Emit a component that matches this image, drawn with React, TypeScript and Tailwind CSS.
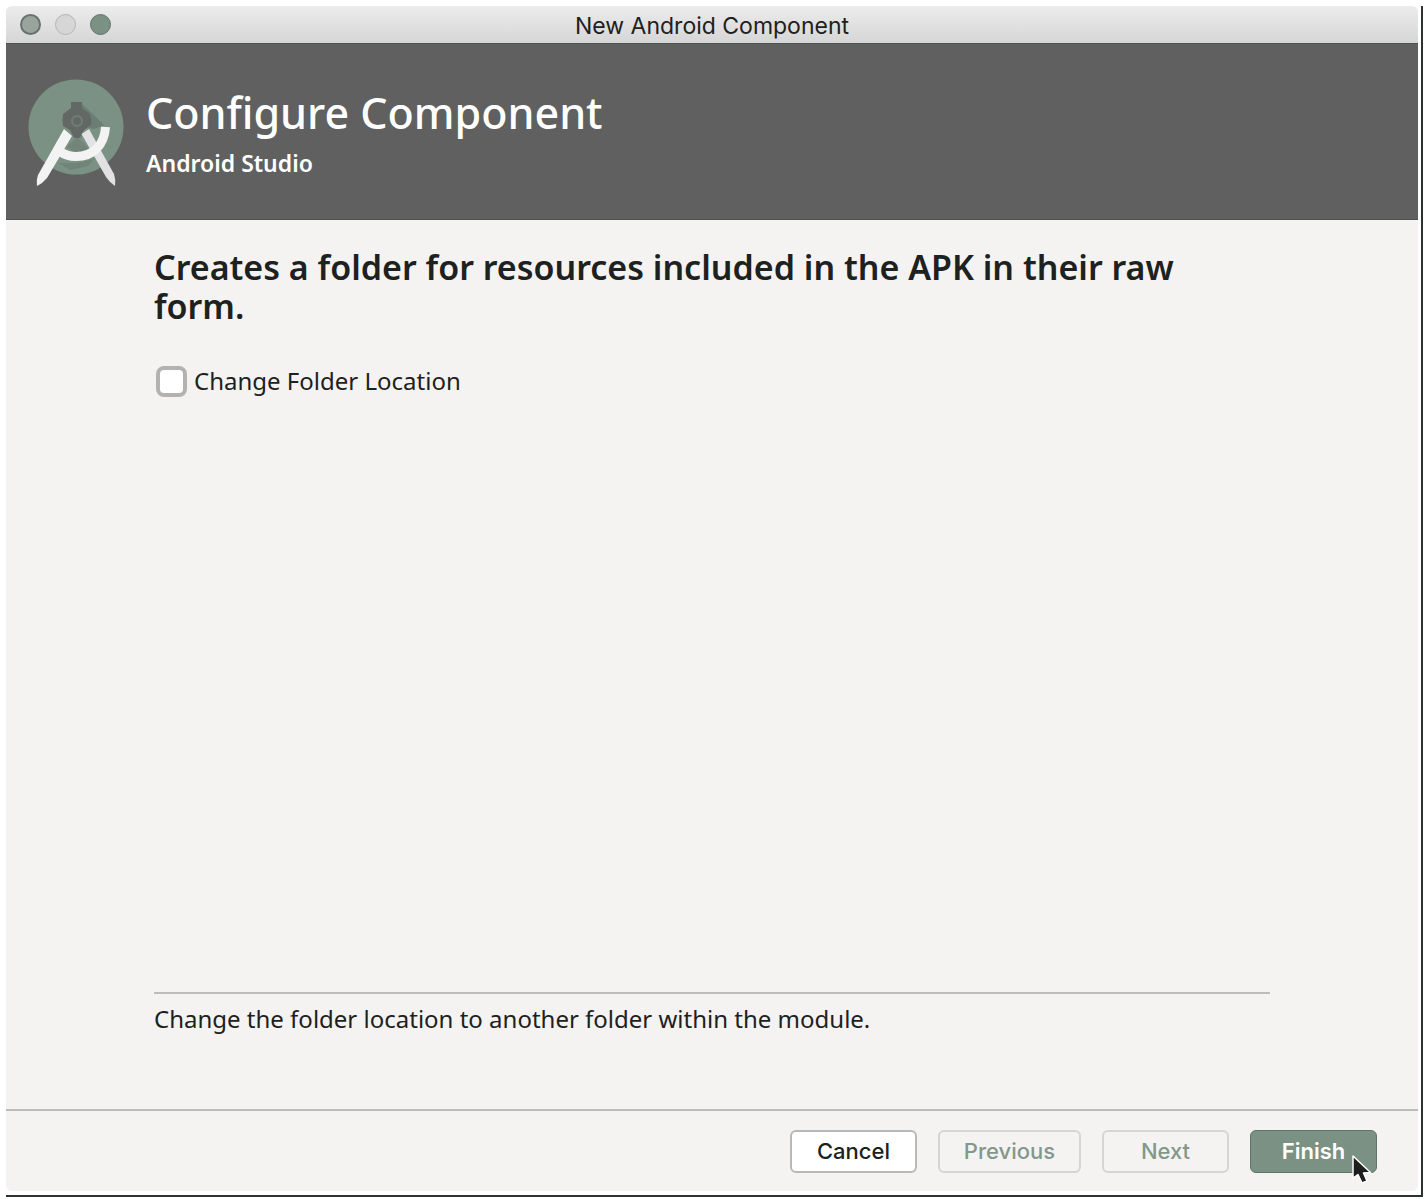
import React from "react";

function StudioLogo() {
  return (
    <svg width="96" height="108" viewBox="0 0 96 108" aria-hidden="true" className="shrink-0">
      <circle cx="48" cy="48" r="47.5" fill="#7a9183" />
      <path d="M53 24 L76 46 L66 50 L58 48 Z" fill="#6c7d73" />
      <path d="M39 68 L49 58 L62 71 L50 74 Z" fill="#728578" />
      <path d="M30 84 L48 84 L66 80 L60 87 L42 91 Z" fill="#718478" />
      <path
        d="M43 23 h11 v6 l7 5 q3 5 2 12 l-7 5 -4 8 h-6 l-4 -8 -7 -4 q-1 -7 0 -12 l8 -6 z"
        fill="#626965"
      />
      <circle cx="49" cy="42" r="5" fill="none" stroke="#6f7d75" strokeWidth="2" />
      <path d="M53.5 55 L61 50 L86 95 Q88 101 87 107 Q82 104 78 98 Z" fill="#e2e1e3" />
      <path
        d="M77.5 48 C76.5 66 65 77.5 48 77.5 C41 77.5 36 75.5 31 72"
        fill="none"
        stroke="#f4f3f4"
        strokeWidth="9"
      />
      <path d="M36 50 L44 57 L19 99 Q15 104 9 107 Q8 101 10 96 Z" fill="#f4f3f4" />
    </svg>
  );
}

function Pointer() {
  return (
    <svg
      width="24"
      height="36"
      viewBox="0 0 24 36"
      aria-hidden="true"
      className="pointer-events-none absolute right-0.5 -bottom-4"
    >
      <path
        d="M2 3 L2 25 L7 21.5 L11 30 L16 28 L12.5 20 L19.5 19.5 Z"
        fill="#1d1f1e"
        stroke="#ffffff"
        strokeWidth="1.5"
        strokeLinejoin="round"
      />
    </svg>
  );
}

export default function App() {
  return (
    <div className="flex min-h-screen flex-col bg-white pt-1.5 pl-1.5 font-['Noto_Sans',sans-serif] text-[#1d2120]">
      <div className="mr-[2px] mb-[2px] flex flex-1 flex-col border-r-2 border-b-2 border-[#2b3330] pr-[3px] pb-[4px]">
        <main className="flex flex-1 flex-col overflow-hidden rounded-md bg-[#f4f3f2]">
          <div className="relative flex h-[37px] items-center justify-center bg-linear-to-b from-[#ececec] to-[#d6d6d6]">
            <div className="absolute left-3.5 flex gap-3.5">
              <button
                aria-label="Close"
                className="size-[21px] rounded-full border-2 border-[#67736d] bg-[#9aa49f]"
              />
              <button
                aria-label="Minimize"
                className="size-[21px] rounded-full border border-[#b4b4b4] bg-[#d6d6d6]"
              />
              <button
                aria-label="Zoom"
                className="size-[21px] rounded-full border border-[#5f7467] bg-[#7a9183]"
              />
            </div>
            <div className="pt-1 font-['Inter',sans-serif] text-[23px]">New Android Component</div>
          </div>

          <header className="flex h-[177px] items-start gap-[22px] border-t border-b border-[#4d5450] bg-[#606060] px-[22px] pt-[35px] text-white">
            <StudioLogo />
            <div className="pt-1">
              <h1 className="text-[43px] leading-[60px] font-medium">Configure Component</h1>
              <p className="text-[23px] leading-10 font-semibold">Android Studio</p>
            </div>
          </header>

          <section className="flex flex-1 flex-col px-[148px] pt-7 pb-[72px]">
            <h2 className="pr-10 text-[34px] leading-[39px] font-semibold">
              Creates a folder for resources included in the APK in their raw form.
            </h2>
            <label className="mt-[37px] flex items-center gap-[7px] self-start text-2xl leading-9">
              <input
                type="checkbox"
                className="ml-0.5 size-[31px] appearance-none rounded-lg border-4 border-[#b2b2b2] bg-white"
              />
              Change Folder Location
            </label>
            <p className="mt-auto border-t-2 border-[#bcbcbc] pt-[7px] text-2xl leading-9">
              Change the folder location to another folder within the module.
            </p>
          </section>

          <footer className="flex h-[82px] items-center justify-end gap-[21px] border-t-2 border-[#bcbcbc] pr-[41px] font-['Inter',sans-serif] text-[22px] font-medium">
            <button className="h-[43px] w-[127px] rounded-md border-2 border-[#b8b8b8] bg-white">
              Cancel
            </button>
            <button disabled className="h-[43px] w-[143px] rounded-md border-2 border-[#d4d5d4] text-[#83988b]">
              Previous
            </button>
            <button disabled className="h-[43px] w-[127px] rounded-md border-2 border-[#d4d5d4] text-[#83988b]">
              Next
            </button>
            <div className="relative">
              <button className="h-[43px] w-[127px] rounded-md border border-[#5f7467] bg-[#7a9183] font-semibold text-white">
                Finish
              </button>
              <Pointer />
            </div>
          </footer>
        </main>
      </div>
    </div>
  );
}
